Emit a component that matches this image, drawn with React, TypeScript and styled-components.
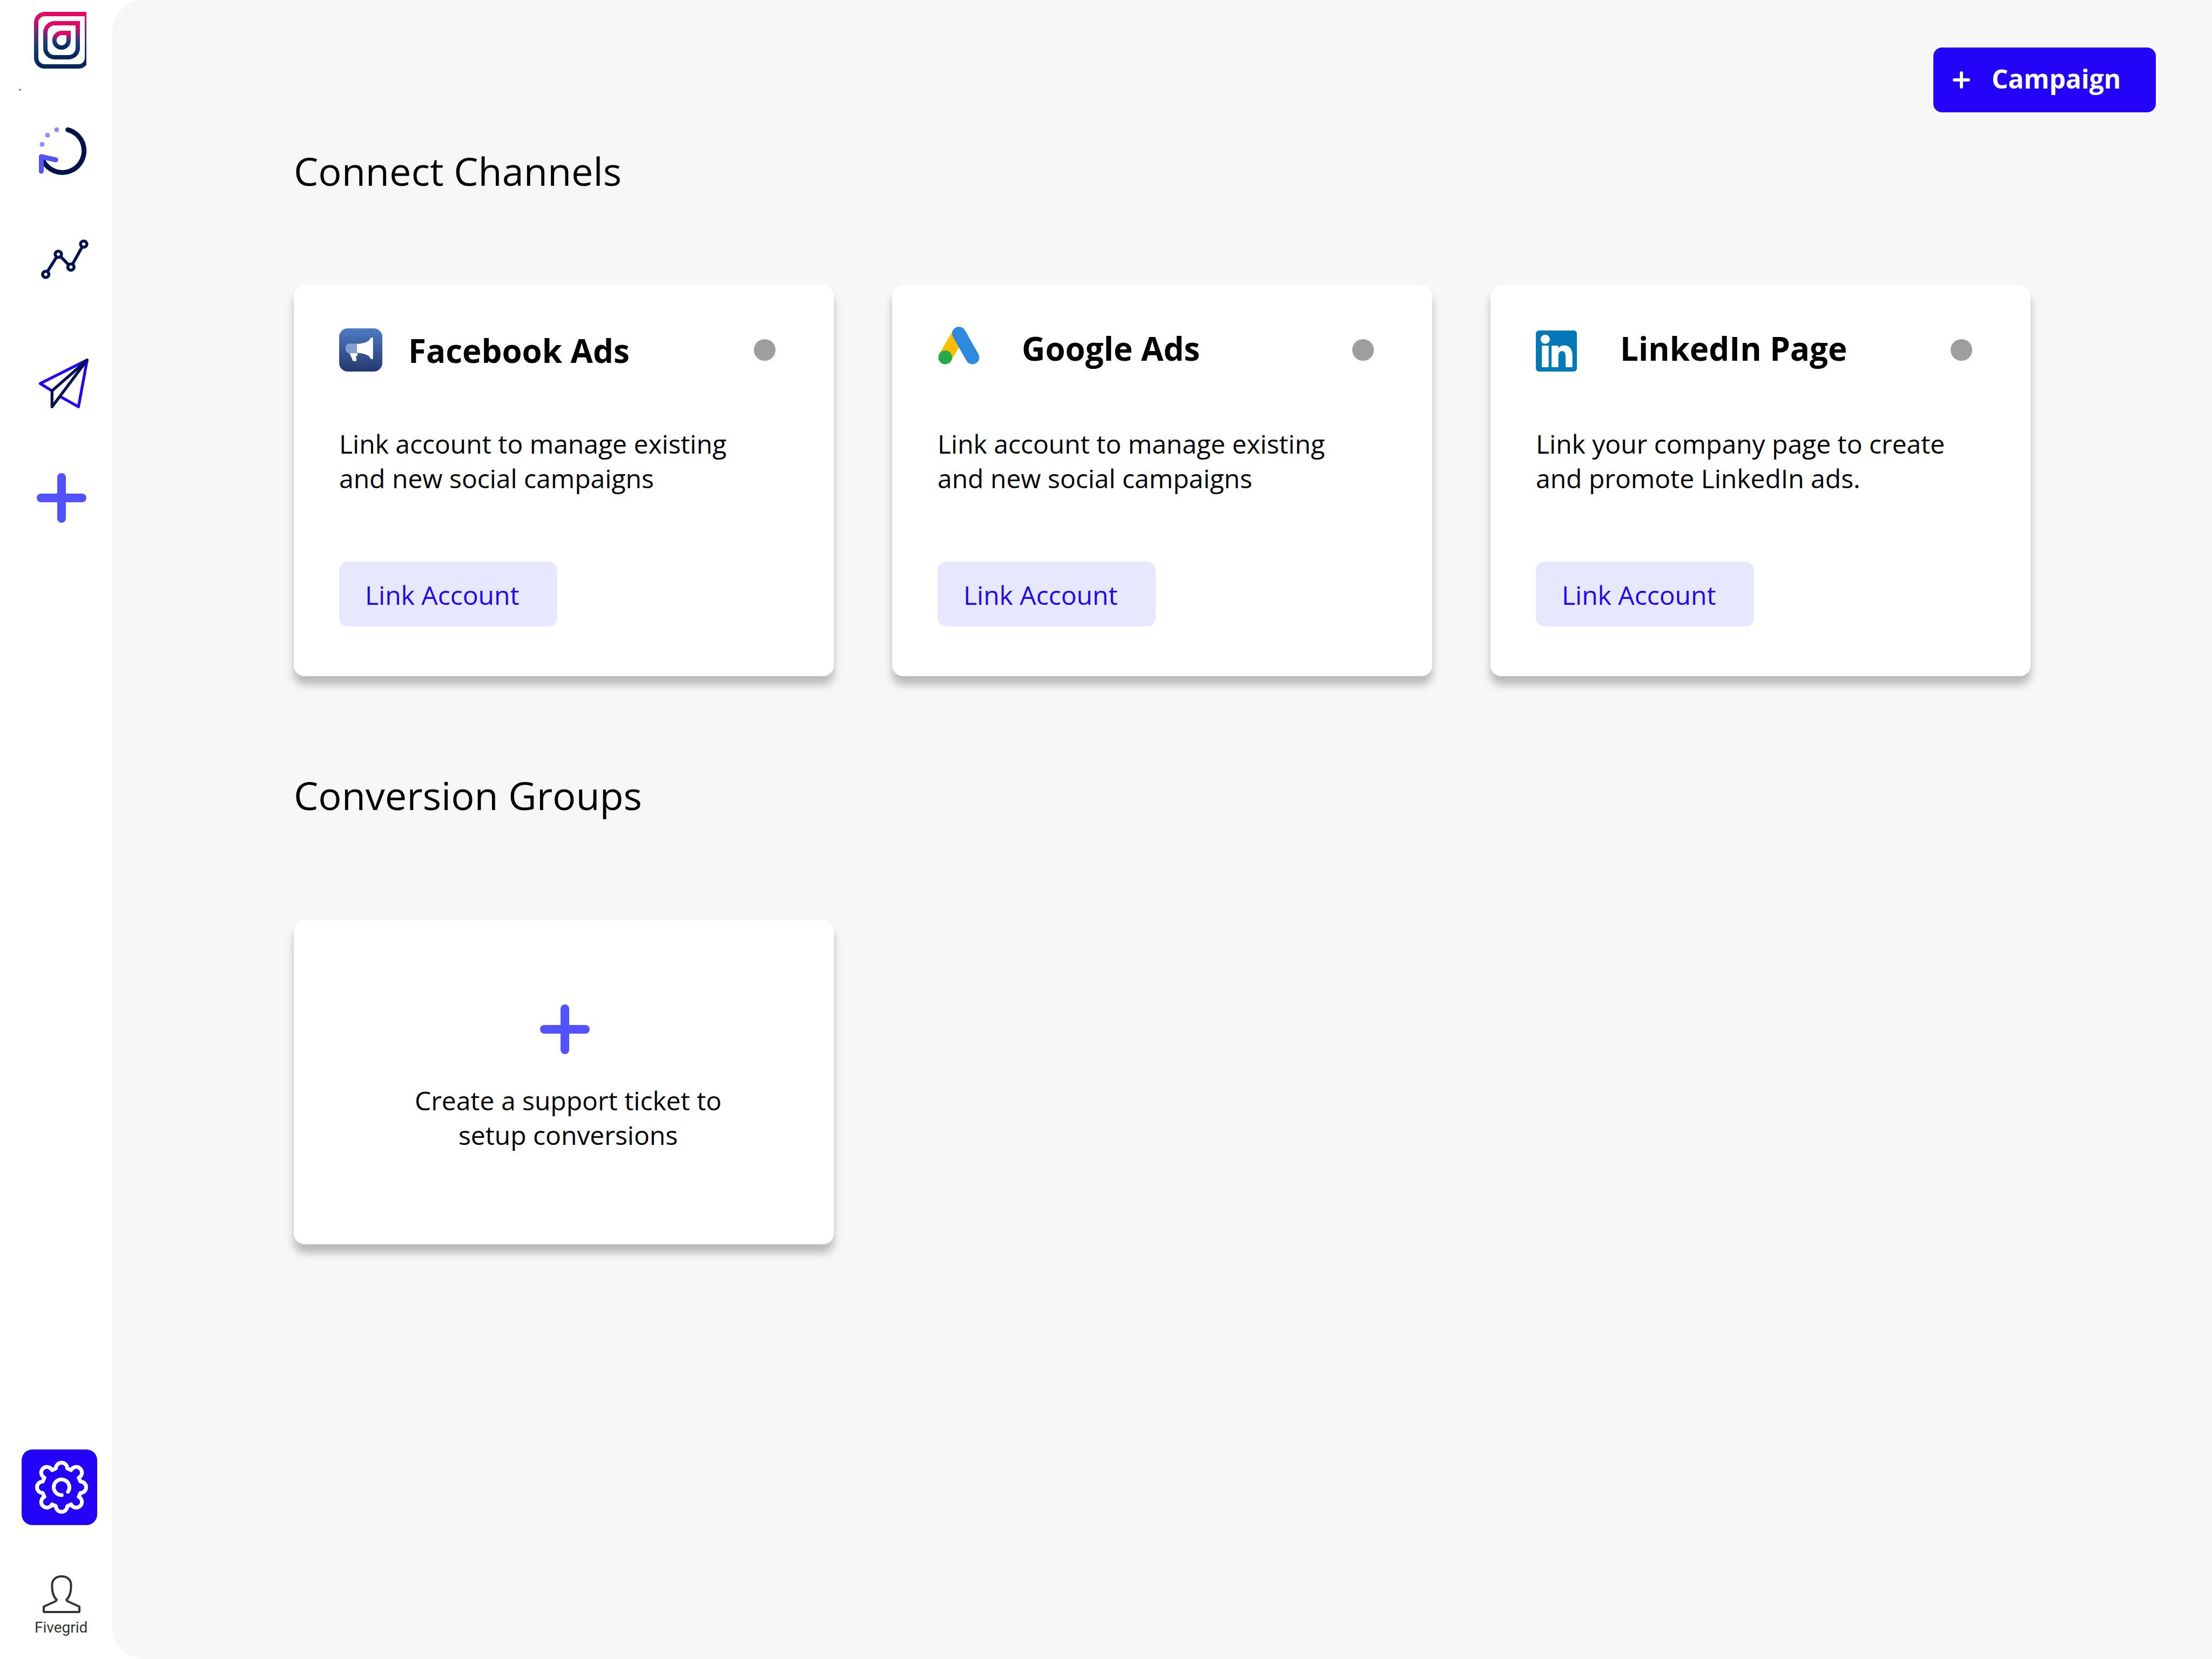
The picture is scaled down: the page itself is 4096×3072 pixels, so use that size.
import React from 'react';
import styled, { createGlobalStyle } from 'styled-components';

const colors = {
  primary: '#2404f9',
  primarySoft: '#e6e8ff',
  accent: '#5252ff',
  accentSoft: '#8891ff',
  navy: '#00124e',
  page: '#f7f7f7',
  idle: '#9f9d9e',
  ink: '#000000',
};

const GlobalStyle = createGlobalStyle`
  * { box-sizing: border-box; }
  body {
    margin: 0;
    background: #ffffff;
    color: ${colors.ink};
    font-family: "Open Sans", "Noto Sans", sans-serif;
  }
  button { font-family: inherit; border: 0; cursor: pointer; }
`;

const Shell = styled.div`
  display: grid;
  grid-template-columns: 208px minmax(0, 1fr);
  min-height: 100vh;
`;

const Sidebar = styled.nav`
  display: flex;
  flex-direction: column;
  align-items: flex-start;
  gap: 92px;
  padding: 14px 28px 40px 40px;
`;

const NavLink = styled.a`
  display: flex;
  justify-content: flex-end;
  width: 140px;
  padding-right: 16px;
`;

const SidebarFooter = styled.div`
  display: flex;
  flex-direction: column;
  gap: 88px;
  margin-top: auto;
`;

const SettingsLink = styled(NavLink)`
  align-items: center;
  height: 140px;
  border-radius: 20px;
  background: ${colors.primary};
`;

const AccountLink = styled.a`
  display: flex;
  flex-direction: column;
  width: 140px;
  padding-left: 24px;
  color: #333333;
  text-decoration: none;
`;

const AccountName = styled.span`
  font-family: Roboto, "Open Sans", sans-serif;
  font-size: 28px;
  line-height: 36px;
  white-space: nowrap;
`;

const Art = styled.svg`
  display: block;
  flex: none;
  overflow: visible;
  fill: none;
`;

const Main = styled.main`
  padding: 88px 104px 120px 336px;
  border-radius: 60px 0 0 60px;
  background: ${colors.page};
`;

const Toolbar = styled.header`
  display: flex;
  justify-content: flex-end;
`;

const CampaignButton = styled.button`
  display: flex;
  align-items: center;
  gap: 40px;
  min-width: 412px;
  height: 120px;
  padding: 0 64px 0 36px;
  border-radius: 16px;
  background: ${colors.primary};
  color: #ffffff;
  font-size: 48px;
  font-weight: 700;
  line-height: 64px;
`;

const CampaignLabel = styled.span`
  padding-bottom: 4px;
`;

const Section = styled.section<{ $top: number; $gap: number }>`
  display: flex;
  flex-direction: column;
  gap: ${(p) => p.$gap}px;
  margin: ${(p) => p.$top}px 232px 0 0;
`;

const SectionTitle = styled.h2`
  margin: 0;
  font-size: 72px;
  font-weight: 400;
  line-height: 96px;
`;

const CardGrid = styled.div`
  display: grid;
  grid-template-columns: repeat(3, minmax(0, 1fr));
  gap: 108px;
`;

const Card = styled.article`
  padding: 72px 84px 92px;
  border-radius: 20px;
  background: #ffffff;
  box-shadow: 0 16px 16px rgba(0, 0, 0, 0.25);
`;

const CardHeader = styled.div<{ $gap: number; $lift: number }>`
  display: flex;
  align-items: center;
  gap: ${(p) => p.$gap}px;
  padding-right: 24px;

  h3 { padding-bottom: ${(p) => p.$lift}px; }
`;

const CardTitle = styled.h3`
  flex: 1;
  margin: 0;
  padding-top: 2px;
  font-size: 60px;
  font-weight: 700;
  line-height: 80px;
`;

const StatusDot = styled.span`
  width: 40px;
  height: 40px;
  border-radius: 50%;
  background: ${colors.idle};
`;

const CardText = styled.p`
  margin: 94px 0 122px;
  font-size: 48px;
  line-height: 64px;
`;

const LinkButton = styled.button`
  display: block;
  width: 404px;
  height: 120px;
  padding: 4px 48px 0;
  border-radius: 16px;
  background: ${colors.primarySoft};
  color: ${colors.primary};
  font-size: 48px;
  line-height: 64px;
  text-align: left;
`;

const TicketCard = styled.button`
  display: flex;
  flex-direction: column;
  align-items: center;
  gap: 54px;
  padding: 156px 200px 170px 204px;
  border-radius: 20px;
  background: #ffffff;
  box-shadow: 0 16px 16px rgba(0, 0, 0, 0.25);
  color: ${colors.ink};
  font-size: 48px;
  line-height: 64px;
`;

const TicketText = styled.span`
  padding-left: 12px;
  white-space: nowrap;
`;

const Logo = () => (
  <Art width="100" height="120" viewBox="0 0 100 120" aria-hidden="true">
    <defs>
      <linearGradient id="logoFade" x1="0" y1="0" x2="0" y2="1">
        <stop offset="0" stopColor="#e80765" />
        <stop offset="0.12" stopColor="#d20c68" />
        <stop offset="0.55" stopColor="#1f3f80" />
        <stop offset="1" stopColor="#00265c" />
      </linearGradient>
      <clipPath id="logoEdge">
        <rect x="-2" y="0" width="98" height="120" />
      </clipPath>
    </defs>
    <g stroke="url(#logoFade)" strokeWidth="8" clipPath="url(#logoEdge)">
      <path d="M97 12H19A16 16 0 0 0 3 28V93A16 16 0 0 0 19 109H81A16 16 0 0 0 97 93Z" />
      <path d="M80 29H37A17 17 0 0 0 20 46V75A17 17 0 0 0 37 92H63A17 17 0 0 0 80 75Z" />
      <path d="M63 47H50A13.2 13.2 0 0 0 36.8 60V61A13 13 0 0 0 63 61Z" />
    </g>
    <path d="M-28 150L-24 153.600H-28Z" fill="#0d3350" />
  </Art>
);

const RefreshIcon = () => (
  <Art width="100" height="120" viewBox="0 0 100 120" strokeWidth="9" strokeLinecap="round" strokeLinejoin="round" aria-hidden="true">
    <path d="M61.7 14.3A40.200 40.200 0 1 1 16.500 73" stroke={colors.navy} />
    <path d="M12.500 91V64L39.300 70" stroke={colors.accent} />
    <g fill={colors.accentSoft}>
      <circle cx="41" cy="14.300" r="4.500" />
      <circle cx="24" cy="24.300" r="4.500" />
      <circle cx="14" cy="41.300" r="4.500" />
    </g>
  </Art>
);

const chartPoints = [[20.7, 70], [44, 32.8], [67.3, 56.5], [91, 14]];

const ChartIcon = () => (
  <Art width="100" height="120" viewBox="0 0 100 120" stroke={colors.navy} strokeWidth="5.600" aria-hidden="true">
    <polyline points={chartPoints.map((p) => p.join(',')).join(' ')} />
    {chartPoints.map(([x, y]) => (
      <circle key={x} cx={x} cy={y} r="5.800" fill="#ffffff" />
    ))}
  </Art>
);

const SendIcon = () => (
  <Art width="100" height="120" viewBox="0 0 100 120" strokeWidth="5.300" strokeLinecap="round" strokeLinejoin="round" aria-hidden="true">
    <path d="M32.300 73.800L10.500 60.200L97.300 16.700L81.300 103.300L49.300 85.200" stroke={colors.primary} />
    <path d="M97.300 16.700L32.300 73.800V103.300Z" stroke={colors.navy} />
  </Art>
);

const PlusIcon = ({ width = 100, height = 120 }: { width?: number; height?: number }) => (
  <Art width={width} height={height} viewBox={`${-width / 2} ${-height / 2} ${width} ${height}`} stroke={colors.accent} strokeWidth="16" strokeLinecap="round" aria-hidden="true">
    <path d="M-38 0H38M0 -38V38" />
  </Art>
);

const GearIcon = () => (
  <Art width="100" height="100" viewBox="0 0 100 100" stroke="#ffffff" strokeWidth="7" strokeLinecap="round" strokeLinejoin="round" aria-hidden="true">
    <path d="M39.500 15A10.500 10.500 0 0 1 60.500 15L67.700 18.300A10.500 10.500 0 1 1 81.700 32.300L85 39.500A10.500 10.500 0 0 1 85 60.500L81.700 67.700A10.500 10.500 0 1 1 67.700 81.700L60.500 85A10.500 10.500 0 0 1 39.500 85L32.300 81.700A10.500 10.500 0 1 1 18.300 67.700L15 60.500A10.500 10.500 0 0 1 15 39.500L18.300 32.300A10.500 10.500 0 1 1 32.300 18.300Z" />
    <path d="M50.300 64.500A14.500 14.500 0 1 1 61.800 58.400" />
  </Art>
);

const UserIcon = () => (
  <Art width="100" height="84" viewBox="0 0 100 84" stroke="#333333" strokeWidth="4" strokeLinejoin="round" aria-hidden="true">
    <path d="M50 7C39 7 32.500 14 32.500 22C32 35 34 44 41 50.500L39 53L17 63V71.500Q17 73 18.500 73H81.500Q83 73 83 71.500V63L61 53L59 50.500C66 44 68 35 67.500 22C67.500 14 61 7 50 7Z" />
  </Art>
);

const FacebookAdsIcon = () => (
  <Art width="80" height="96" viewBox="0 0 80 96" aria-hidden="true">
    <defs>
      <linearGradient id="facebookFade" x1="0" y1="0" x2="0" y2="1">
        <stop offset="0" stopColor="#4e7bc3" />
        <stop offset="1" stopColor="#253870" />
      </linearGradient>
    </defs>
    <rect y="8" width="80" height="80" rx="16" fill="url(#facebookFade)" />
    <path d="M16 36.300H33V54H16L12 49V41Z" fill="#86a0cb" />
    <path d="M33 36.700C46 36.500 57 32 58.500 25H62.700V65H58.500C57 58 46 54 33 53.600Z" fill="#ffffff" />
    <path d="M19.300 54H33.500L34.500 58.500L31 59.500L32.500 67.500Q29 69.500 25.500 68.300Z" fill="#ffffff" />
  </Art>
);

const GoogleAdsIcon = () => (
  <Art width="80" height="96" viewBox="0 0 80 96" strokeWidth="25.400" aria-hidden="true">
    <path d="M39.700 17.800L14.300 61.700" stroke="#ffbf00" />
    <path d="M39.700 17.800L64.700 61.700" stroke="#2e8ade" strokeLinecap="round" />
    <circle cx="14.300" cy="61.700" r="12.800" fill="#27a84a" />
  </Art>
);

const LinkedInIcon = () => (
  <Art width="80" height="96" viewBox="0 0 80 96" aria-hidden="true">
    <rect y="12" width="76" height="76" rx="6" fill="#0079b9" />
    <g fill="#ffffff">
      <circle cx="17.300" cy="28.300" r="8.500" />
      <rect x="11" y="40" width="12.700" height="40" rx="1.500" />
      <path d="M30.500 40H40Q41.500 40 41.500 41.500V45C47 36.500 67.700 36 67.700 58V78.500Q67.700 80 66.200 80H56.500Q55 80 55 78.500V60C55 53 52.500 50 48.500 50C44 50 41.700 53.500 41.700 60V78.500Q41.700 80 40.200 80H30.500Q29 80 29 78.500V41.500Q29 40 30.500 40Z" />
    </g>
  </Art>
);

const channels = [
  {
    name: 'Facebook Ads',
    icon: <FacebookAdsIcon />,
    gap: 48,
    lift: 0,
    lines: ['Link account to manage existing', 'and new social campaigns'],
  },
  {
    name: 'Google Ads',
    icon: <GoogleAdsIcon />,
    gap: 76,
    lift: 8,
    lines: ['Link account to manage existing', 'and new social campaigns'],
  },
  {
    name: 'LinkedIn Page',
    icon: <LinkedInIcon />,
    gap: 76,
    lift: 8,
    lines: ['Link your company page to create', 'and promote LinkedIn ads.'],
  },
];

const navItems = [
  { label: 'Home', icon: <Logo /> },
  { label: 'Activity', icon: <RefreshIcon /> },
  { label: 'Analytics', icon: <ChartIcon /> },
  { label: 'Campaigns', icon: <SendIcon /> },
  { label: 'Create', icon: <PlusIcon /> },
];

export default function App() {
  return (
    <>
      <GlobalStyle />
      <Shell>
        <Sidebar>
          {navItems.map((item) => (
            <NavLink key={item.label} href="#" aria-label={item.label}>
              {item.icon}
            </NavLink>
          ))}
          <SidebarFooter>
            <SettingsLink href="#" aria-label="Settings">
              <GearIcon />
            </SettingsLink>
            <AccountLink href="#">
              <UserIcon />
              <AccountName>Fivegrid</AccountName>
            </AccountLink>
          </SidebarFooter>
        </Sidebar>
        <Main>
          <Toolbar>
            <CampaignButton type="button">
              <Art width="32" height="32" viewBox="0 0 32 32" stroke="#ffffff" strokeWidth="6" strokeLinecap="round" aria-hidden="true">
                <path d="M3 16H29M16 3V29" />
              </Art>
              <CampaignLabel>Campaign</CampaignLabel>
            </CampaignButton>
          </Toolbar>
          <Section $top={60} $gap={164}>
            <SectionTitle>Connect Channels</SectionTitle>
            <CardGrid>
              {channels.map((channel) => (
                <Card key={channel.name}>
                  <CardHeader $gap={channel.gap} $lift={channel.lift}>
                    {channel.icon}
                    <CardTitle>{channel.name}</CardTitle>
                    <StatusDot />
                  </CardHeader>
                  <CardText>
                    {channel.lines[0]}
                    <br />
                    {channel.lines[1]}
                  </CardText>
                  <LinkButton type="button">Link Account</LinkButton>
                </Card>
              ))}
            </CardGrid>
          </Section>
          <Section $top={172} $gap={184}>
            <SectionTitle>Conversion Groups</SectionTitle>
            <CardGrid>
              <TicketCard type="button">
                <PlusIcon width={92} height={92} />
                <TicketText>
                  Create a support ticket to
                  <br />
                  setup conversions
                </TicketText>
              </TicketCard>
            </CardGrid>
          </Section>
        </Main>
      </Shell>
    </>
  );
}
